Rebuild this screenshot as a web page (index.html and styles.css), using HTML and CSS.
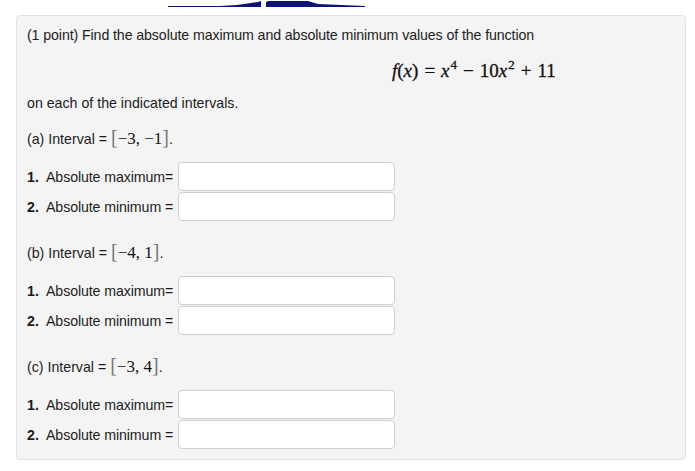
FILE: index.html
```html
<!DOCTYPE html>
<html>
<head>
<meta charset="utf-8">
<link rel="stylesheet" href="styles.css">
</head>
<body>
<div class="topdeco">
  <svg width="200" height="9" viewBox="0 0 200 9">
    <path d="M0 6 L52 6 L69 5 L90 2 L93 1 L93 7 L0 7 Z" fill="#0c1478"/>
    <path d="M98 3 Q98 1 101 1 L140 1 L150 4 L197 6 L197 7 L98 7 Z" fill="#0c1478"/>
  </svg>
</div>
<div class="panel">
  <p class="intro">(1 point) Find the absolute maximum and absolute minimum values of the function</p>
  <div class="formula"><span class="m"><i>f</i>(<i>x</i>)<span class="op">=</span><i>x</i><sup>4</sup><span class="op">−</span>10<i>x</i><sup>2</sup><span class="op">+</span>11</span></div>
  <p class="text">on each of the indicated intervals.</p>

  <div class="section">
    <p class="interval">(a) Interval = <span class="m"><span class="br">[</span>−3, −1<span class="br">]</span></span>.</p>
    <div class="answers">
      <span class="num">1.</span><span class="lab">Absolute maximum=</span><span class="box"></span>
      <span class="num">2.</span><span class="lab">Absolute minimum =</span><span class="box"></span>
    </div>
  </div>

  <div class="section">
    <p class="interval">(b) Interval = <span class="m"><span class="br">[</span>−4, 1<span class="br">]</span></span>.</p>
    <div class="answers">
      <span class="num">1.</span><span class="lab">Absolute maximum=</span><span class="box"></span>
      <span class="num">2.</span><span class="lab">Absolute minimum =</span><span class="box"></span>
    </div>
  </div>

  <div class="section">
    <p class="interval">(c) Interval = <span class="m"><span class="br">[</span>−3, 4<span class="br">]</span></span>.</p>
    <div class="answers">
      <span class="num">1.</span><span class="lab">Absolute maximum=</span><span class="box"></span>
      <span class="num">2.</span><span class="lab">Absolute minimum =</span><span class="box"></span>
    </div>
  </div>
</div>
</body>
</html>
```
FILE: styles.css
```css
html, body {
  margin: 0;
  padding: 0;
  background: #ffffff;
}
body {
  font-family: "Liberation Sans", Arial, sans-serif;
  font-size: 14.2px;
  color: #1c1c1c;
}
.topdeco {
  height: 15px;
  padding-left: 168px;
  box-sizing: border-box;
}
.topdeco svg {
  display: block;
}
.panel {
  margin-left: 16px;
  width: 670px;
  box-sizing: border-box;
  background: #f4f4f4;
  border: 1px solid #e2e2e2;
  border-radius: 4px;
  padding: 10px 10px 9px 10px;
}
p {
  margin: 0;
}
.intro {
  line-height: 18px;
  letter-spacing: -0.1px;
}
.formula {
  margin-top: 15px;
  height: 24px;
  line-height: 24px;
  padding-left: 365px;
}
.m {
  font-family: "Liberation Serif", "DejaVu Serif", serif;
  font-size: 19px;
  color: #111;
}
.formula .m {
  -webkit-text-stroke: 0.3px #111;
}
.op {
  margin: 0 6px;
}
.m sup {
  font-size: 13px;
  vertical-align: 8px;
  line-height: 0;
  margin-left: 1px;
}
.text {
  margin-top: 11px;
  line-height: 18px;
}
.section {
  margin-top: 14px;
}
.section + .section {
  margin-top: 18px;
}
.interval {
  line-height: 22px;
  height: 22px;
}
.interval .m {
  font-size: 17px;
}
.br {
  color: #777;
  font-size: 20px;
  font-weight: 300;
}
.lab {
  letter-spacing: -0.1px;
}
.answers {
  margin-top: 14px;
  display: grid;
  grid-template-columns: 19px 132px 217px;
  grid-auto-rows: 30px;
  align-items: center;
}
.num {
  font-weight: bold;
}
.box {
  height: 29px;
  align-self: start;
  box-sizing: border-box;
  background: #fff;
  border: 1px solid #cfcfcf;
  border-radius: 4px;
}
```
